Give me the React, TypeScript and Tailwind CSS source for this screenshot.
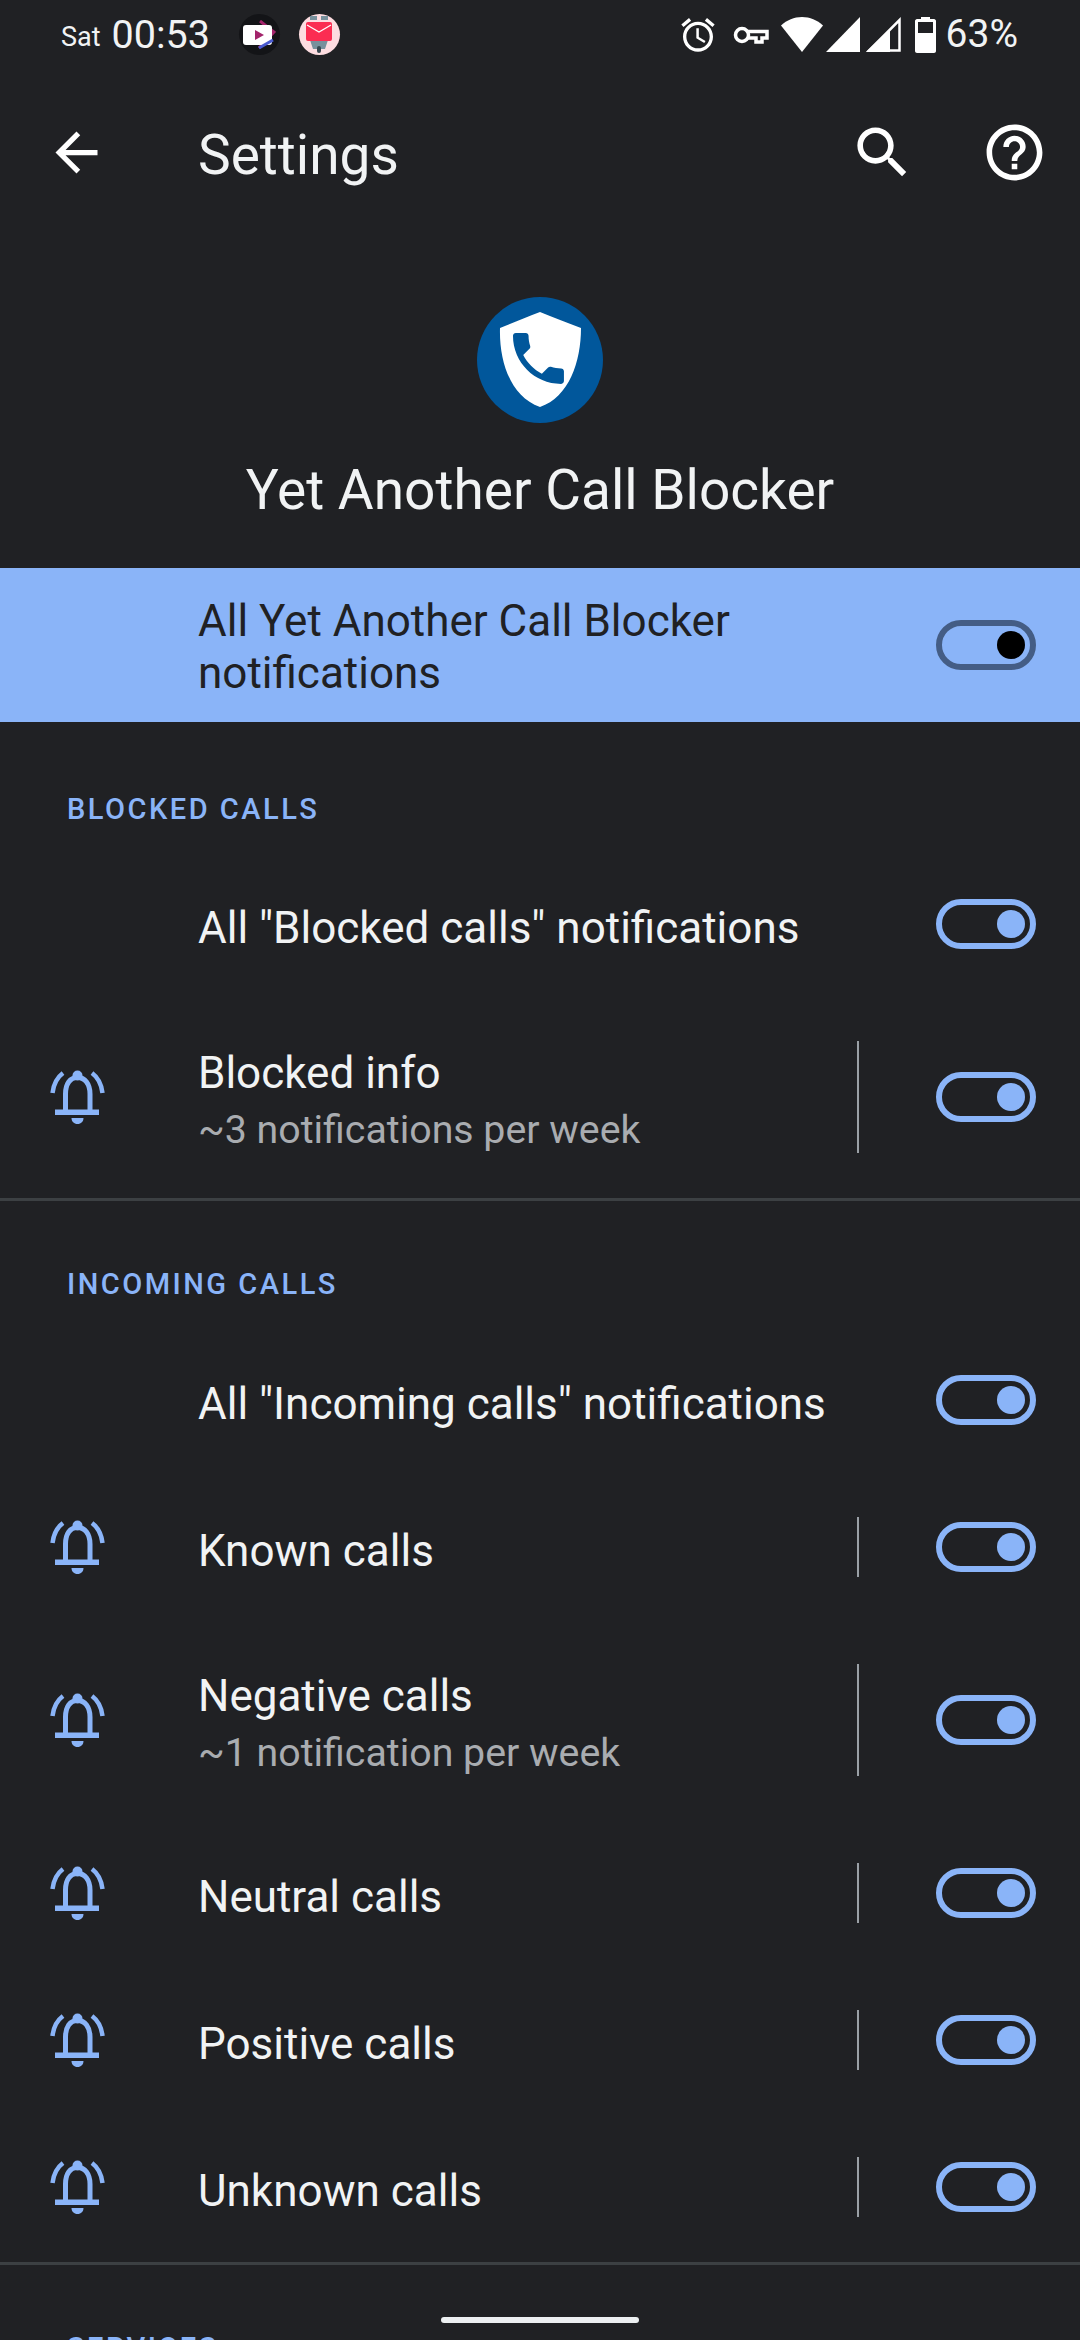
const Bell = () => (
  <svg width="55" height="54" viewBox="0 0 55 54" fill="none" className="text-[#8ab4f8]">
    <path d="M2.500 23C3.500 14 7 7.500 13 3M52.500 23C51.500 14 48 7.500 42 3" stroke="currentColor" strokeWidth="4.500" />
    <path d="M15.500 41V24C15.500 14 20 7.500 27.500 7.500S40 14 40 24V41" stroke="currentColor" strokeWidth="5" />
    <circle cx="27.500" cy="5.500" r="5" fill="currentColor" />
    <rect x="5" y="39.500" width="44" height="5.500" fill="currentColor" />
    <path d="M21.500 48H33.500C33.500 51.500 31 54 27.500 54S21.500 51.500 21.500 48Z" fill="currentColor" />
  </svg>
);

const Toggle = ({ band }: { band?: boolean }) => (
  <div
    className={`flex h-[50px] w-[100px] items-center justify-end rounded-full border-[6px] pr-[5px] ${
      band ? "border-[#445d85]" : "border-[#8ab4f8]"
    }`}
  >
    <div className={`h-[28px] w-[28px] rounded-full ${band ? "bg-black" : "bg-[#8ab4f8]"}`} />
  </div>
);

type RowProps = {
  title: string;
  sub?: string;
  bell?: boolean;
};

const Row = ({ title, sub, bell }: RowProps) => (
  <div className={`flex items-center pr-[44px] ${sub ? "h-[199px]" : "h-[147px]"}`}>
    <div className="flex w-[198px] shrink-0 pl-[50px]">{bell && <Bell />}</div>
    <div className="min-w-0 flex-1 pt-[8px]">
      <p className="text-[44px] leading-[52px] text-[#f1f3f4]">{title}</p>
      {sub && <p className="mt-[6px] text-[39.300px] leading-[50px] text-[#a9acb0]">{sub}</p>}
    </div>
    {bell && <div className={`mr-[77px] w-[2px] bg-[#9aa0a6] ${sub ? "h-[112px]" : "h-[60px]"}`} />}
    <Toggle />
  </div>
);

const Heading = ({ children, first }: { children: string; first?: boolean }) => (
  <div className={`flex items-center pl-[67px] ${first ? "h-[128px] pt-[48px]" : "h-[125px] pt-[43px]"}`}>
    <h2 className="text-[29px] font-medium uppercase tracking-[2.500px] text-[#8ab4f8]">{children}</h2>
  </div>
);

const StatusIcons = () => (
  <div className="flex items-center">
    <svg width="40" height="40" viewBox="0 0 24 24" fill="white" className="mr-[15px]">
      <path d="M22 5.720l-4.600-3.860-1.290 1.530 4.600 3.860L22 5.720zM7.880 3.390L6.600 1.860 2 5.710l1.290 1.530 4.590-3.850zM12.500 8H11v6l4.750 2.850.75-1.230-4-2.370V8zM12 4c-4.970 0-9 4.030-9 9s4.030 9 9 9 9-4.030 9-9-4.030-9-9-9zm0 16c-3.870 0-7-3.130-7-7s3.130-7 7-7 7 3.130 7 7-3.130 7-7 7z" />
    </svg>
    <svg width="36" height="20" viewBox="0 0 36 20" fill="none" stroke="white" strokeWidth="3.500" className="mr-[12px]">
      <circle cx="9" cy="10" r="6.500" />
      <path d="M15 6.500H34V13H29V17H23V13H15" />
    </svg>
    <svg width="42" height="35" viewBox="0 0 42 35" fill="white" className="mr-[3px]">
      <path d="M21 0C29 0 36 3 42 8.500L21 35L0 8.500C6 3 13 0 21 0Z" />
    </svg>
    <svg width="35" height="35" viewBox="0 0 35 35" fill="white" className="mr-[5px]">
      <path d="M34 0V35H0Z" />
    </svg>
    <svg width="35" height="35" viewBox="0 0 35 35" className="mr-[14px]">
      <path d="M33.500 3V33.500H3L33.500 3Z" fill="none" stroke="white" strokeWidth="2.500" />
      <path d="M24 12V35H0Z" fill="white" />
    </svg>
    <svg width="21" height="36" viewBox="0 0 21 36" fill="white" className="mr-[10px]">
      <path d="M6 0H15V2H19C20 2 21 3 21 4V34C21 35 20 36 19 36H2C1 36 0 35 0 34V4C0 3 1 2 2 2H6Z" />
      <rect x="3" y="5" width="15" height="11" fill="#202124" />
    </svg>
    <span className="text-[39px] leading-none text-[#f1f3f4]">63%</span>
  </div>
);

const App = () => {
  return (
    <div className="relative h-[2340px] w-[1080px] overflow-hidden bg-[#202124] font-['Roboto',sans-serif] text-white">
      {/* status bar */}
      <div className="flex h-[69px] items-center justify-between pl-[61px] pr-[62px]">
        <div className="flex items-center">
          <span className="mt-[5px] text-[27px] text-[#f1f3f4]">Sat</span>
          <span className="ml-[11px] text-[39.500px] leading-none text-[#f1f3f4]">00:53</span>
          <div className="ml-[29px] flex h-[41px] w-[41px] items-center justify-center rounded-full bg-[#131417]">
            <svg width="34" height="30" viewBox="0 0 34 30">
              <path d="M18 1L32 12L17 28" fill="none" stroke="#a3246b" strokeWidth="3" />
              <rect x="1" y="5" width="29" height="20" rx="3" fill="white" />
              <path d="M13 10L22 15L13 20Z" fill="#a3246b" />
              <path d="M17 28L31 20" stroke="#4a5bd0" strokeWidth="3" />
            </svg>
          </div>
          <div className="ml-[19px] flex h-[41px] w-[41px] items-center justify-center rounded-full bg-[#fddde1]">
            <svg width="28" height="37" viewBox="0 0 28 37">
              <rect x="5" y="0" width="7" height="4" fill="#78909c" />
              <rect x="16" y="0" width="7" height="4" fill="#78909c" />
              <path d="M5 24H23L20 33H8Z" fill="#78909c" />
              <rect x="12" y="30" width="4" height="7" rx="2" fill="#37474f" />
              <rect x="1" y="6" width="26" height="19" rx="2" fill="#fb2d52" />
              <path d="M2 9L14 16L26 9" fill="none" stroke="#fff" strokeWidth="1.200" />
            </svg>
          </div>
        </div>
        <StatusIcons />
      </div>

      {/* toolbar */}
      <div className="flex h-[144px] items-center pt-[22px]">
        <svg width="63" height="63" viewBox="0 0 24 24" fill="white" className="ml-[45px]">
          <path d="M20 11H7.830l5.590-5.590L12 4l-8 8 8 8 1.410-1.410L7.830 13H20v-2z" />
        </svg>
        <h1 className="ml-[90px] mt-[6px] flex-1 text-[55px] leading-none text-[#f1f3f4]">Settings</h1>
        <svg width="67" height="67" viewBox="0 0 24 24" fill="white" className="mr-[65px]">
          <path d="M15.500 14h-.790l-.280-.270C15.410 12.590 16 11.110 16 9.500 16 5.910 13.090 3 9.500 3S3 5.910 3 9.500 5.910 16 9.500 16c1.610 0 3.090-.590 4.230-1.570l.270.280v.790l5 4.990L20.490 19l-4.990-5zm-6 0C7.010 14 5 11.990 5 9.500S7.010 5 9.500 5 14 7.010 14 9.500 11.990 14 9.500 14z" />
        </svg>
        <svg width="67" height="67" viewBox="0 0 24 24" fill="white" className="mr-[32px]">
          <path d="M11 18h2v-2h-2v2zm1-16C6.480 2 2 6.480 2 12s4.480 10 10 10 10-4.480 10-10S17.520 2 12 2zm0 18c-4.410 0-8-3.590-8-8s3.590-8 8-8 8 3.590 8 8-3.590 8-8 8zm0-14c-2.210 0-4 1.790-4 4h2c0-1.100.9-2 2-2s2 .9 2 2c0 2-3 1.750-3 5h2c0-2.250 3-2.500 3-5 0-2.210-1.790-4-4-4z" />
        </svg>
      </div>

      {/* app header */}
      <div className="flex h-[355px] flex-col items-center pt-[84px]">
        <svg width="126" height="126" viewBox="0 0 126 126">
          <circle cx="63" cy="63" r="63" fill="#01579b" />
          <path d="M63 15C50 20 36 26 23 31C22 65 34 100 63 110C92 100 104 65 104 31C90 26 76 20 63 15Z" fill="white" />
          <path
            transform="translate(27.500 27.500) scale(2.830)"
            fill="#01579b"
            d="M6.620 10.790c1.440 2.830 3.760 5.140 6.590 6.590l2.200-2.200c.27-.27.67-.36 1.020-.24 1.120.37 2.330.57 3.570.57.55 0 1 .45 1 1V20c0 .55-.45 1-1 1-9.390 0-17-7.610-17-17 0-.55.45-1 1-1h3.500c.55 0 1 .45 1 1 0 1.250.2 2.450.57 3.570.11.35.03.74-.25 1.020l-2.200 2.200z"
          />
        </svg>
        <p className="mt-[37px] whitespace-nowrap text-[55px] leading-[60px] text-[#f1f3f4]">Yet Another Call Blocker</p>
      </div>

      {/* master switch */}
      <div className="flex h-[154px] items-center bg-[#8ab4f8] pr-[44px] pl-[198px]">
        <p className="min-w-0 flex-1 pr-[130px] pt-[4px] text-[44px] leading-[52px] text-[#202124]">
          All Yet Another Call Blocker notifications
        </p>
        <Toggle band />
      </div>

      <Heading first>Blocked calls</Heading>
      <Row title={'All "Blocked calls" notifications'} />
      <Row title="Blocked info" sub="~3 notifications per week" bell />
      <div className="mt-[2px] h-[3px] bg-[#3c4043]" />

      <Heading>Incoming calls</Heading>
      <Row title={'All "Incoming calls" notifications'} />
      <Row title="Known calls" bell />
      <Row title="Negative calls" sub="~1 notification per week" bell />
      <Row title="Neutral calls" bell />
      <Row title="Positive calls" bell />
      <Row title="Unknown calls" bell />
      <div className="mt-[2px] h-[3px] bg-[#3c4043]" />

      <Heading>Services</Heading>

      {/* gesture bar */}
      <div className="absolute bottom-[17px] left-[441px] h-[6px] w-[198px] rounded-full bg-[#eceff1]" />
    </div>
  );
};

export default App;
